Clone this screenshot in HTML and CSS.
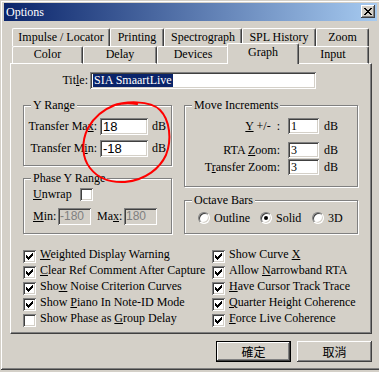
FILE: index.html
```html
<!doctype html>
<html>
<head>
<meta charset="utf-8">
<title>Options</title>
<link rel="stylesheet" href="styles.css">
</head>
<body>
<div class="window">
  <div class="titlebar">
    <span class="caption">Options</span>
    <span class="close"><svg width="8" height="7" viewBox="0 0 8 7" shape-rendering="crispEdges"><path d="M0 0h2v1h-2z M6 0h2v1h-2z M1 1h2v1h-2z M5 1h2v1h-2z M2 2h4v1h-4z M3 3h2v1h-2z M2 4h4v1h-4z M1 5h2v1h-2z M5 5h2v1h-2z M0 6h2v1h-2z M6 6h2v1h-2z" fill="#000"/></svg></span>
  </div>

  <div class="tabs">
    <div class="tabrow tabrow-back">
      <span class="tab">Impulse / Locator</span>
      <span class="tab">Printing</span>
      <span class="tab">Spectrograph</span>
      <span class="tab">SPL History</span>
      <span class="tab">Zoom</span>
    </div>
    <div class="tabrow tabrow-front">
      <span class="tab">Color</span>
      <span class="tab">Delay</span>
      <span class="tab">Devices</span>
      <span class="tab active">Graph</span>
      <span class="tab">Input</span>
    </div>
  </div>

  <div class="panel">
    <div class="title-row">
      <span class="lbl">Tit<u>l</u>e:</span>
      <span class="field title-field"><span class="sel">SIA SmaartLive</span></span>
    </div>

    <div class="groups">
      <div class="col">
        <fieldset class="group yrange">
          <legend>Y Range</legend>
          <div class="rows">
            <div class="yrow"><span class="lbl">Transfer Ma<u>x</u>:</span><span class="field num">18</span><span class="unit">dB</span></div>
            <div class="yrow"><span class="lbl">Transfer M<u>i</u>n:</span><span class="field num">-18</span><span class="unit">dB</span></div>
          </div>
        </fieldset>
        <fieldset class="group phase">
          <legend>Phase Y Range</legend>
          <div class="rows">
            <div class="unwrap">
              <span><u>U</u>nwrap</span>
              <span class="box"></span>
            </div>
            <div class="minmax">
              <span class="lbl"><u>M</u>in:</span>
              <span class="field off">-180</span>
              <span class="lbl lbl-max">Ma<u>x</u>:</span>
              <span class="field off">180</span>
            </div>
          </div>
        </fieldset>
      </div>

      <div class="col">
        <fieldset class="group move">
          <legend>Move Increments</legend>
          <div class="rows">
            <div class="mrow"><span class="lbl"><u>Y</u> +/- &nbsp;:</span><span class="field">1</span><span class="unit">dB</span></div>
            <div class="mrow mrow-2"><span class="lbl">RTA <u>Z</u>oom:</span><span class="field">3</span><span class="unit">dB</span></div>
            <div class="mrow mrow-3"><span class="lbl">T<u>r</u>ansfer Zoom:</span><span class="field">3</span><span class="unit">dB</span></div>
          </div>
        </fieldset>
        <fieldset class="group octave">
          <legend>Octave Bars</legend>
          <div class="rows">
            <span class="opt"><span class="radio"></span>Outline</span>
            <span class="opt"><span class="radio on"></span>Solid</span>
            <span class="opt"><span class="radio"></span>3D</span>
          </div>
        </fieldset>
      </div>
    </div>

    <div class="checks">
      <div class="check-col">
        <div class="check"><span class="box"><svg width="7" height="7" viewBox="0 0 7 7" shape-rendering="crispEdges"><path d="M6 0h1v1h-1z M5 1h2v1h-2z M0 2h1v1h-1z M4 2h3v1h-3z M0 3h2v1h-2z M3 3h3v1h-3z M0 4h5v1h-5z M1 5h3v1h-3z M2 6h1v1h-1z"/></svg></span><span class="text"><u>W</u>eighted Display Warning</span></div>
        <div class="check"><span class="box"><svg width="7" height="7" viewBox="0 0 7 7" shape-rendering="crispEdges"><path d="M6 0h1v1h-1z M5 1h2v1h-2z M0 2h1v1h-1z M4 2h3v1h-3z M0 3h2v1h-2z M3 3h3v1h-3z M0 4h5v1h-5z M1 5h3v1h-3z M2 6h1v1h-1z"/></svg></span><span class="text"><u>C</u>lear Ref Comment After Capture</span></div>
        <div class="check"><span class="box"><svg width="7" height="7" viewBox="0 0 7 7" shape-rendering="crispEdges"><path d="M6 0h1v1h-1z M5 1h2v1h-2z M0 2h1v1h-1z M4 2h3v1h-3z M0 3h2v1h-2z M3 3h3v1h-3z M0 4h5v1h-5z M1 5h3v1h-3z M2 6h1v1h-1z"/></svg></span><span class="text">Sho<u>w</u> Noise Criterion Curves</span></div>
        <div class="check"><span class="box"><svg width="7" height="7" viewBox="0 0 7 7" shape-rendering="crispEdges"><path d="M6 0h1v1h-1z M5 1h2v1h-2z M0 2h1v1h-1z M4 2h3v1h-3z M0 3h2v1h-2z M3 3h3v1h-3z M0 4h5v1h-5z M1 5h3v1h-3z M2 6h1v1h-1z"/></svg></span><span class="text">Show <u>P</u>iano In Note-ID Mode</span></div>
        <div class="check"><span class="box"></span><span class="text">Show Phase as <u>G</u>roup Delay</span></div>
      </div>
      <div class="check-col">
        <div class="check"><span class="box"><svg width="7" height="7" viewBox="0 0 7 7" shape-rendering="crispEdges"><path d="M6 0h1v1h-1z M5 1h2v1h-2z M0 2h1v1h-1z M4 2h3v1h-3z M0 3h2v1h-2z M3 3h3v1h-3z M0 4h5v1h-5z M1 5h3v1h-3z M2 6h1v1h-1z"/></svg></span><span class="text">Show Curve <u>X</u></span></div>
        <div class="check"><span class="box"><svg width="7" height="7" viewBox="0 0 7 7" shape-rendering="crispEdges"><path d="M6 0h1v1h-1z M5 1h2v1h-2z M0 2h1v1h-1z M4 2h3v1h-3z M0 3h2v1h-2z M3 3h3v1h-3z M0 4h5v1h-5z M1 5h3v1h-3z M2 6h1v1h-1z"/></svg></span><span class="text">Allow <u>N</u>arrowband RTA</span></div>
        <div class="check"><span class="box"><svg width="7" height="7" viewBox="0 0 7 7" shape-rendering="crispEdges"><path d="M6 0h1v1h-1z M5 1h2v1h-2z M0 2h1v1h-1z M4 2h3v1h-3z M0 3h2v1h-2z M3 3h3v1h-3z M0 4h5v1h-5z M1 5h3v1h-3z M2 6h1v1h-1z"/></svg></span><span class="text"><u>H</u>ave Cursor Track Trace</span></div>
        <div class="check"><span class="box"><svg width="7" height="7" viewBox="0 0 7 7" shape-rendering="crispEdges"><path d="M6 0h1v1h-1z M5 1h2v1h-2z M0 2h1v1h-1z M4 2h3v1h-3z M0 3h2v1h-2z M3 3h3v1h-3z M0 4h5v1h-5z M1 5h3v1h-3z M2 6h1v1h-1z"/></svg></span><span class="text"><u>Q</u>uarter Height Coherence</span></div>
        <div class="check"><span class="box"><svg width="7" height="7" viewBox="0 0 7 7" shape-rendering="crispEdges"><path d="M6 0h1v1h-1z M5 1h2v1h-2z M0 2h1v1h-1z M4 2h3v1h-3z M0 3h2v1h-2z M3 3h3v1h-3z M0 4h5v1h-5z M1 5h3v1h-3z M2 6h1v1h-1z"/></svg></span><span class="text"><u>F</u>orce Live Coherence</span></div>
      </div>
    </div>
  </div>

  <div class="buttons">
    <span class="btn btn-default">確定</span>
    <span class="btn">取消</span>
  </div>

  <!-- hand drawn mark over the Y range inputs -->
  <svg class="scribble" width="379" height="372" viewBox="0 0 379 372">
    <path d="M112 106 C125 101 150 100 160 110 C170 120 172 140 166 155 C160 168 146 180 125 182 C108 183 97 177 90 168 C82 158 81 142 88 128 C94 117 102 110 115 105 C122 103 130 103 137 104" fill="none" stroke="#f00" stroke-width="2" stroke-linecap="round" stroke-linejoin="round"/>
  </svg>
</div>
</body>
</html>
```

FILE: styles.css
```css
html, body { margin:0; padding:0; }
body {
  width:379px; height:372px; overflow:hidden;
  background:#d4d0c8; color:#000;
  font-family:"Liberation Serif", "Times New Roman", serif;
  font-size:12px;
}
u { text-underline-offset:1px; }

.window {
  position:relative; box-sizing:border-box;
  width:381px; height:370px; padding:3px 4px 0 4px;
  background:#d4d0c8;
  box-shadow:inset 1px 1px #d4d0c8, inset -1px -1px #404040, inset 2px 2px #fff, inset -2px -2px #808080;
}

/* title bar */
.titlebar { display:flex; height:18px; background:linear-gradient(to right, #0a246a, #a6caf0); color:#fff; }
.caption { padding-left:2px; line-height:18px; }
.close {
  display:flex; align-items:center; justify-content:center;
  box-sizing:border-box; width:14px; height:13px; margin:2px 2px 0 auto;
  background:#d4d0c8;
  box-shadow:inset -1px -1px #404040, inset 1px 1px #fff, inset -2px -2px #808080;
}

/* tabs */
.tabs { position:relative; z-index:1; margin:7px 0 -1px 8px; }
.tabrow { display:grid; }
.tabrow-back { grid-template-columns:98px 54px 78px 74px 53px; }
.tabrow-front { grid-template-columns:71px 74px 72px 68px 72px; }
.tab {
  box-sizing:border-box; background:#d4d0c8; text-align:center; white-space:nowrap;
  border-top:1px solid #fff; border-left:1px solid #fff; border-right:1px solid #404040;
  border-radius:2px 2px 0 0;
  box-shadow:inset -1px 0 #808080;
}
.tabrow-back .tab { height:18px; line-height:17px; }
.tabrow-front .tab { height:18px; line-height:15px; border-bottom:1px solid #fff; }
.tabrow-front .tab.active { position:relative; z-index:2; height:21px; margin:-3px -2px 0; line-height:17px; border-bottom:0; }

/* page */
.panel {
  box-sizing:border-box; width:362px; height:271px; margin-left:6px;
  border:1px solid #404040; border-top-color:#fff; border-left-color:#fff;
  box-shadow:inset -1px -1px #808080;
}

.field {
  box-sizing:border-box; height:17px; padding:0 3px; line-height:17px;
  background:#fff; white-space:nowrap; overflow:hidden;
  box-shadow:inset 1px 1px #808080, inset -1px -1px #fff, inset 2px 2px #404040, inset -2px -2px #d4d0c8;
}
.field.num { font-family:"Liberation Sans", Arial, sans-serif; font-size:13px; }
.field.off { width:33px; padding:0 2px; background:#d4d0c8; color:#808080; font-family:"Liberation Sans", Arial, sans-serif; }

.title-row { display:grid; grid-template-columns:77px 226px; column-gap:2px; margin-top:8px; }
.title-row .lbl { text-align:right; line-height:17px; }
.title-field { padding-left:3px; }
.sel { display:inline-block; vertical-align:top; margin-top:2px; padding:0 1px; line-height:13px; background:#0a246a; color:#fff; }

.groups { display:grid; grid-template-columns:149px 174px; column-gap:12px; align-items:start; margin:10px 0 0 12px; }
.col { display:flex; flex-direction:column; }
.group {
  margin:0; padding:0; min-width:0;
  border:1px solid #808080;
  box-shadow:inset 1px 1px #fff, 1px 1px #fff;
}
.group legend { margin-left:7px; padding:0 2px; line-height:13px; background:#d4d0c8; }

.yrange .rows { display:grid; row-gap:5px; padding:6px 0 8px; }
.yrow { display:grid; grid-template-columns:73px 48px auto; column-gap:3px; height:17px; line-height:16px; }
.yrow .lbl { text-align:right; }
.yrow .unit { margin-left:1px; }

.phase { margin-top:6px; }
.phase .rows { padding:3px 0 8px 9px; }
.unwrap { display:grid; grid-template-columns:47px 13px; height:13px; line-height:13px; }
.minmax { display:flex; height:17px; margin-top:7px; line-height:17px; }
.minmax .lbl { width:25px; }
.minmax .lbl-max { width:27px; margin-left:6px; }

.move .rows { padding:6px 0 11px; }
.mrow { display:flex; height:16px; line-height:16px; }
.mrow .lbl { width:95px; text-align:right; white-space:nowrap; }
.mrow .field { width:31px; height:16px; margin-left:8px; line-height:16px; }
.mrow .unit { margin-left:5px; }
.mrow-2 { margin-top:8px; }
.mrow-3 { margin-top:1px; }

.octave { margin-top:7px; }
.octave .rows { display:grid; grid-template-columns:62px 52px auto; padding:5px 0 9px 13px; }
.opt { display:flex; align-items:center; gap:4px; height:12px; line-height:12px; }
.radio {
  position:relative; box-sizing:border-box; width:12px; height:12px; border-radius:50%;
  background:#fff;
  border:1px solid; border-color:#808080 #fff #fff #808080;
  box-shadow:inset 1px 1px #404040, inset -1px -1px #d4d0c8;
}
.radio.on::after {
  content:""; position:absolute; left:3px; top:3px; width:4px; height:4px; border-radius:50%; background:#000;
}

/* check boxes */
.box {
  display:flex; align-items:center; justify-content:center; flex:none;
  box-sizing:border-box; width:13px; height:13px; background:#fff;
  box-shadow:inset 1px 1px #808080, inset -1px -1px #fff, inset 2px 2px #404040, inset -2px -2px #d4d0c8;
}
.checks { display:grid; grid-template-columns:189px auto; margin:16px 0 0 12px; }
.check-col { display:flex; flex-direction:column; }
.check { display:flex; height:16px; }
.check .text { margin:-2px 0 0 4px; line-height:13px; white-space:nowrap; }

/* buttons */
.buttons { display:flex; justify-content:flex-end; gap:6px; margin:7px 5px 0 0; }
.btn {
  display:flex; align-items:center; justify-content:center;
  box-sizing:border-box; width:75px; height:21px;
  font-family:"Noto Sans CJK TC", "Noto Sans CJK SC", sans-serif; font-size:12px;
  background:#d4d0c8;
  box-shadow:inset -1px -1px #404040, inset 1px 1px #fff, inset -2px -2px #808080;
}
.btn-default { border:1px solid #000; }

.scribble { position:absolute; left:0; top:0; z-index:5; pointer-events:none; }
```
